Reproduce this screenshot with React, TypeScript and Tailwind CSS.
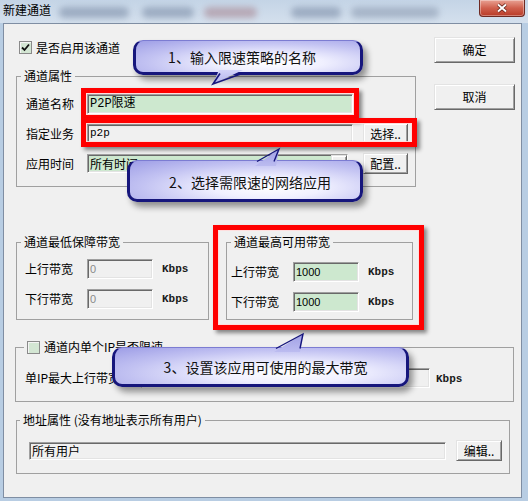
import React from "react";

type BoxProps = { className?: string; children?: React.ReactNode };

// sunken edit box
const Field = ({ className = "", children }: BoxProps) => (
  <div
    className={`flex items-center overflow-hidden whitespace-nowrap border border-t-[#a0a0a0] border-l-[#a0a0a0] border-b-white border-r-white pl-[2px] shadow-[inset_1px_1px_0_#696969,inset_-1px_-1px_0_#e3e3e3] ${className}`}
  >
    {children}
  </div>
);

// raised push button
const Btn = ({ className = "", children }: BoxProps) => (
  <div
    className={`flex items-center justify-center border border-t-[#e3e3e3] border-l-[#e3e3e3] border-b-[#696969] border-r-[#696969] bg-[#f0f0f0] shadow-[inset_1px_1px_0_#ffffff,inset_-1px_-1px_0_#a0a0a0] ${className}`}
  >
    {children}
  </div>
);

const Check = ({ checked }: { checked?: boolean }) => (
  <span className="flex h-[13px] w-[13px] shrink-0 items-center justify-center border border-[#8a8a8a] bg-[#d3e6d3] shadow-[inset_1px_1px_0_#f4f4f4]">
    {checked && (
      <svg width="9" height="9" viewBox="0 0 9 9">
        <path d="M1 4.5 L3.5 7 L8 1.5" fill="none" stroke="#111" strokeWidth="1.8" />
      </svg>
    )}
  </span>
);

const Kbps = () => (
  <span className="ml-[9px] font-['Liberation_Mono',monospace] text-[11px] font-bold text-[#1a1a1a]">
    Kbps
  </span>
);

const Callout = ({ className = "", children }: BoxProps) => (
  <div
    className={`absolute flex items-center justify-center rounded-[10px] border-x-[3px] border-b-[3px] border-t border-[#16167c] border-t-[#7c7cd2] bg-[radial-gradient(ellipse_at_60%_70%,#ffffff_0%,#f0f0ff_28%,#c2c2f2_65%,#9d9de6_100%)] text-[14px] leading-none text-[#111] shadow-[4px_5px_6px_rgba(0,0,0,0.4)] ${className}`}
  >
    {children}
  </div>
);

export default function App() {
  return (
    <div className="relative h-[501px] w-[528px] overflow-hidden bg-[#b8cde3] font-['Noto_Sans_CJK_SC','Liberation_Sans',sans-serif] text-[12px] text-black">
      {/* Title bar with blurred aero background */}
      <div className="flex h-[23px] items-start bg-gradient-to-b from-[#c4d4e6] to-[#d4e0ed]">
        <span className="ml-[3px] mt-[2px] leading-[15px]">新建通道</span>
        <div className="ml-[8px] mt-[7px] h-[11px] w-[70px] rounded-full bg-[#7d8ea8] opacity-60 blur-[3px]" />
        <div className="ml-[13px] mt-[7px] h-[11px] w-[52px] rounded-full bg-[#7d8ea8] opacity-60 blur-[3px]" />
        <div className="ml-[10px] mt-[7px] h-[11px] w-[53px] rounded-full bg-[#a88894] opacity-60 blur-[3px]" />
        <div className="ml-[34px] mt-[7px] h-[11px] w-[50px] rounded-full bg-[#7d8ea8] opacity-60 blur-[3px]" />
        <div className="ml-[10px] mt-[7px] h-[11px] w-[88px] rounded-full bg-[#8d9cb2] opacity-60 blur-[3px]" />
        <div className="ml-auto mr-[3px] flex h-[17px] w-[46px] items-center justify-center rounded-b-[4px] border border-t-0 border-[#6f2a22] bg-gradient-to-b from-[#e8a193] via-[#d0604d] to-[#b83a26] shadow-[inset_0_0_0_1px_rgba(255,255,255,0.35)]">
          <svg width="14" height="10" viewBox="0 0 14 10">
            <path d="M3 1.5 L11 8.5 M11 1.5 L3 8.5" stroke="#5a1a10" strokeWidth="3.4" />
            <path d="M3 1.5 L11 8.5 M11 1.5 L3 8.5" stroke="#ffffff" strokeWidth="2" />
          </svg>
        </div>
      </div>

      {/* Client area */}
      <div className="ml-[3px] h-[475px] w-[519px] border border-[#7f8ea3] bg-[#f0f0f0]">
        {/* Top: channel properties + buttons */}
        <div className="flex items-start">
          <div className="ml-[12px] w-[400px]">
            <div className="ml-[3px] mt-[17px] flex h-[13px] items-center gap-[4px]">
              <Check checked />
              <span className="leading-[15px]">是否启用该通道</span>
            </div>
            <fieldset className="mt-[14px] border border-[#a0a0a0] pb-[12px] pt-[9px]">
              <legend className="ml-[4px] px-[3px] leading-[16px]">通道属性</legend>
              <div className="flex flex-col gap-[9px] pl-[9px]">
                <div className="flex h-[21px] items-center">
                  <span className="w-[61px]">通道名称</span>
                  <Field className="h-[20px] w-[266px] bg-[#cde8cf] font-['Liberation_Mono','Noto_Sans_CJK_SC',monospace] text-[12px]">
                    P2P限速
                  </Field>
                </div>
                <div className="flex h-[21px] items-center">
                  <span className="w-[61px]">指定业务</span>
                  <Field className="h-[19px] w-[266px] bg-[#f0f0f0] font-['Liberation_Mono',monospace] text-[11px]">
                    p2p
                  </Field>
                  <Btn className="ml-[10px] h-[21px] w-[45px]">选择..</Btn>
                </div>
                <div className="flex h-[21px] items-center">
                  <span className="w-[61px]">应用时间</span>
                  <Field className="h-[19px] w-[261px] bg-[#cde8cf] pr-0">
                    <span className="flex-1">所有时间</span>
                    <Btn className="h-full w-[16px] text-[7px]">▼</Btn>
                  </Field>
                  <Btn className="ml-[15px] h-[21px] w-[45px]">配置..</Btn>
                </div>
              </div>
            </fieldset>
          </div>
          <div className="ml-[18px] mt-[13px] flex flex-col gap-[21px]">
            <Btn className="h-[26px] w-[81px]">确定</Btn>
            <Btn className="h-[26px] w-[81px]">取消</Btn>
          </div>
        </div>

        {/* Bandwidth groups */}
        <div className="ml-[12px] mt-[47px] flex items-start">
          <fieldset className="w-[193px] border border-[#a0a0a0]">
            <legend className="ml-[4px] px-[3px] leading-[16px]">通道最低保障带宽</legend>
            <div className="flex flex-col gap-[10px] pb-[10px] pl-[8px] pt-[9px]">
              <div className="flex h-[20px] items-center">
                <span className="w-[62px]">上行带宽</span>
                <Field className="h-[20px] w-[66px] font-['Liberation_Sans',sans-serif] text-[11px] text-[#8a8a8a]">0</Field>
                <Kbps />
              </div>
              <div className="flex h-[20px] items-center">
                <span className="w-[62px]">下行带宽</span>
                <Field className="h-[20px] w-[66px] font-['Liberation_Sans',sans-serif] text-[11px] text-[#8a8a8a]">0</Field>
                <Kbps />
              </div>
            </div>
          </fieldset>
          <fieldset className="ml-[17px] w-[187px] border border-[#a0a0a0]">
            <legend className="ml-[4px] px-[3px] leading-[16px]">通道最高可用带宽</legend>
            <div className="flex flex-col gap-[10px] pb-[7px] pl-[4px] pt-[12px]">
              <div className="flex h-[20px] items-center">
                <span className="w-[62px]">上行带宽</span>
                <Field className="h-[20px] w-[66px] bg-[#cde8cf] font-['Liberation_Sans',sans-serif] text-[11px]">1000</Field>
                <Kbps />
              </div>
              <div className="flex h-[20px] items-center">
                <span className="w-[62px]">下行带宽</span>
                <Field className="h-[20px] w-[66px] bg-[#cde8cf] font-['Liberation_Sans',sans-serif] text-[11px]">1000</Field>
                <Kbps />
              </div>
            </div>
          </fieldset>
        </div>

        {/* Per-IP limit */}
        <fieldset className="ml-[11px] mt-[19px] w-[499px] border border-[#a0a0a0]">
          <legend className="ml-[8px] px-[3px] leading-[16px]">
            <span className="flex items-center gap-[4px]">
              <Check />
              通道内单个IP是否限速
            </span>
          </legend>
          <div className="my-[13px] flex h-[20px] items-center pl-[9px]">
            <span className="w-[116px]">单IP最大上行带宽</span>
            <Field className="h-[20px] w-[289px]" />
            <span className="ml-[-3px]">
              <Kbps />
            </span>
          </div>
        </fieldset>

        {/* Address */}
        <fieldset className="ml-[12px] mt-[10px] w-[494px] border border-[#a0a0a0]">
          <legend className="ml-[3px] px-[3px] leading-[16px]">地址属性 (没有地址表示所有用户)</legend>
          <div className="my-[12px] flex h-[21px] items-center pl-[12px]">
            <Field className="h-[18px] w-[417px]">所有用户</Field>
            <Btn className="ml-[10px] h-[21px] w-[46px]">编辑..</Btn>
          </div>
        </fieldset>
      </div>

      {/* Red highlight boxes */}
      <div className="absolute left-[81px] top-[88px] h-[32px] w-[278px] border-[5px] border-[#ff0000] shadow-[3px_3px_4px_rgba(0,0,0,0.45),inset_0_0_0_1px_rgba(255,220,220,0.9)]" />
      <div className="absolute left-[81px] top-[118px] h-[29px] w-[336px] border-[5px] border-[#ff0000] shadow-[3px_3px_4px_rgba(0,0,0,0.45),inset_0_0_0_1px_rgba(255,220,220,0.9)]" />
      <div className="absolute left-[213px] top-[225px] h-[105px] w-[211px] border-[5px] border-[#ff0000] shadow-[3px_3px_4px_rgba(0,0,0,0.45),inset_0_0_0_1px_rgba(255,220,220,0.9)]" />

      {/* Callouts */}
      <Callout className="left-[133px] top-[40px] h-[35px] w-[230px]">
        <span className="mr-[12px]">1、输入限速策略的名称</span>
      </Callout>
      <Callout className="left-[127px] top-[160px] h-[42px] w-[236px]">
        <span className="ml-[10px] mt-[3px]">2、选择需限速的网络应用</span>
      </Callout>
      <Callout className="left-[112px] top-[347px] h-[40px] w-[297px]">
        <span className="ml-[10px] mt-[1px]">3、设置该应用可使用的最大带宽</span>
      </Callout>

      {/* Callout tails */}
      <svg className="pointer-events-none absolute left-0 top-0" width="528" height="501" viewBox="0 0 528 501">
        <defs>
          <linearGradient id="tailDown" x1="0" y1="0" x2="0" y2="1">
            <stop offset="0" stopColor="#d4d4f8" />
            <stop offset="1" stopColor="#b0b0ec" />
          </linearGradient>
          <linearGradient id="tailUp" x1="0" y1="1" x2="0" y2="0">
            <stop offset="0" stopColor="#bcbcf0" />
            <stop offset="1" stopColor="#a0a0e6" />
          </linearGradient>
        </defs>
        <polygon points="219,70 213,84 243,70" fill="url(#tailDown)" />
        <polyline points="220,73.5 213,84 242,73.5" fill="none" stroke="#16167c" strokeWidth="1.6" />
        <polygon points="255,166 279,149 276,166" fill="url(#tailUp)" />
        <polyline points="257,161.5 279,149 274,161.5" fill="none" stroke="#16167c" strokeWidth="1.4" />
        <polygon points="274,352 303,334 300,352" fill="url(#tailUp)" />
        <polyline points="276,348.5 303,334 300,348.5" fill="none" stroke="#16167c" strokeWidth="1.4" />
      </svg>
    </div>
  );
}
